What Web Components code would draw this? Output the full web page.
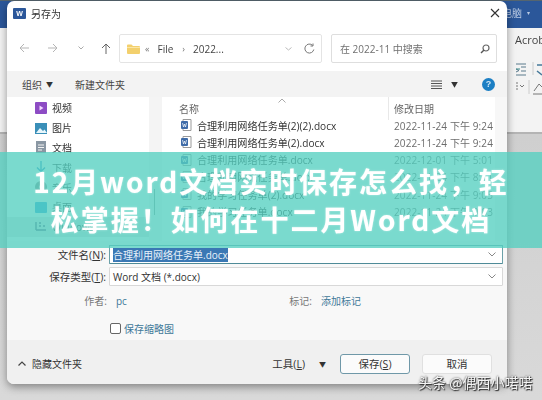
<!DOCTYPE html>
<html lang="zh">
<head>
<meta charset="utf-8">
<title>12月word文档</title>
<style>
  html, body { margin: 0; padding: 0; background: #d6d6d6; }
  body { width: 542px; height: 400px; overflow: hidden; position: relative;
    font-family: "Liberation Sans", "Noto Sans CJK SC", sans-serif; }
</style>
</head>
<body>
<word-backdrop></word-backdrop>
<save-dialog></save-dialog>
<title-band>12月word文档实时保存怎么找，轻松掌握！如何在十二月Word文档</title-band>
<water-mark>头条 @偶西小喏喏</water-mark>

<script>
const FONT = '"Open Sans", "Noto Sans CJK SC", sans-serif';

class WordBackdrop extends HTMLElement {
  connectedCallback() {
    this.attachShadow({ mode: 'open' });
    this.shadowRoot.innerHTML = `
      <style>
        :host { display: flex; flex-direction: column; width: 542px; height: 400px; background: #d3d3d3; filter: blur(.4px); overflow: hidden; }
        .top { height: 28px; background: #2b579a; border-top: 1px solid #55656f; box-sizing: border-box;
          display: flex; justify-content: flex-end; align-items: center; padding: 0 12px 4px 0;
          color: #b9c9e2; font: 10px ${FONT}; gap: 5px; }
        .ribbon { height: 106px; background: #f3f3f3; padding-left: 515px; box-sizing: border-box;
          display: flex; flex-direction: column; font: 11px ${FONT}; color: #444; border-bottom: 2px solid #b4b4b4; }
        .acro { margin-top: 5px; height: 22px; line-height: 14px; white-space: nowrap; }
        .left { position: absolute; left: 0; top: 1px; width: 7px; height: 27px; background: #2b579a; }
        svg { display: block; }
        .rest { flex: 1; background: linear-gradient(#cfcfcf, #d9d9d9); }
      </style>
      <div class="top"><span>电脑</span><span style="font-size:6px">▾</span></div>
      <div class="ribbon">
        <div class="acro">Acrob</div>
        <svg width="27" height="50" viewBox="0 0 27 50">
          <path d="M1 9h10M1 20h10M6 12h5M6 16h5M1 14l3 1.500-3 1.500" stroke="#5b7a8c" fill="none"/>
          <path d="M1 14h4" stroke="#3b8a8a"/>
          <path d="M18 7v13" stroke="#ccc"/>
          <path d="M22 10h5M22 16l5 4" stroke="#46799a" stroke-width="1.500"/>
          <path d="M1 28h2M1 31h2M1 34h2M5 30l2 2 2-2" stroke="#777" fill="none"/>
          <path d="M14 25v14" stroke="#ccc"/>
          <path d="M19 36l5-7 3 3M18 39h9" stroke="#777" fill="none"/>
        </svg>
      </div>
      <div class="left"></div>
      <div class="rest"></div>`;
  }
}

class SideItem extends HTMLElement {
  connectedCallback() {
    this.attachShadow({ mode: 'open' });
    const colour = this.getAttribute('colour') || '#666';
    const shape = this.getAttribute('shape') || 'box';
    const shapes = {
      box: `<rect x="0" y="1" width="12" height="11" rx="1" fill="${colour}"/>`,
      video: `<rect x="0" y="0" width="12" height="12" rx="1" fill="${colour}"/><path d="M4.500 3.500l4 2.500-4 2.500z" fill="#f2d7ff"/>`,
      pic: `<rect x="0" y="1" width="12" height="11" fill="${colour}"/><path d="M1 11l4-5 3 3 1.500-1.500L12 11z" fill="#e8f6fb"/>`,
      doc: `<rect x="1" y="0" width="10" height="12" fill="${colour}"/><path d="M3 4h6M3 6.500h6M3 9h4" stroke="#f3f3f3"/>`,
      down: `<path d="M6 0v10M2 6.500L6 10.500l4-4" stroke="${colour}" stroke-width="1.400" fill="none"/>`,
      disc: `<circle cx="6" cy="6" r="6" fill="${colour}"/><circle cx="6" cy="6" r="2" fill="#f5f5f5"/>`,
      drive: `<path d="M1 1v8M1 9h10M4 5h2M8 5h2M4 2h2" stroke="${colour}" stroke-width="1.400"/>`
    };
    this.shadowRoot.innerHTML = `
      <style>
        :host { display: flex; align-items: center; height: 19.800px; padding-left: 28px; gap: 5px; box-sizing: border-box;
          font: 10px ${FONT}; color: #333; }
        :host([active]) { background: #e5e5e5; }
        svg { flex: none; }
      </style>
      <svg width="12" height="12" viewBox="0 0 12 12">${shapes[shape]}</svg><slot></slot>`;
  }
}

class FileRow extends HTMLElement {
  connectedCallback() {
    this.attachShadow({ mode: 'open' });
    this.shadowRoot.innerHTML = `
      <style>
        :host { display: flex; align-items: center; height: 17.300px; font: 10px ${FONT}; color: #333; }
        .ic { width: 16px; margin-left: 19px; flex: none; }
        .name { width: 197px; flex: none; white-space: nowrap; font-size: 10.100px; }
        .date { color: #6c6c6c; white-space: nowrap; font-size: 10px; letter-spacing: .1px; }
      </style>
      <svg class="ic" width="16" height="12" viewBox="0 0 16 12">
        <path d="M2 .500h8v11H2z" fill="#fff" stroke="#9a9a9a"/>
        <rect x="0" y="2" width="7" height="8" rx="1" fill="#3f6ba8"/>
        <path d="M1.500 4l1 4 1-3 1 3 1-4" stroke="#fff" stroke-width=".7" fill="none"/>
      </svg>
      <span class="name">${this.getAttribute('name')}</span>
      <span class="date">${this.getAttribute('date')}</span>`;
  }
}

class FormField extends HTMLElement {
  connectedCallback() {
    this.attachShadow({ mode: 'open' });
    this.shadowRoot.innerHTML = `
      <style>
        :host { display: flex; flex: none; align-items: center; height: 21px; font: 10.500px ${FONT}; color: #333; }
        .lab { width: 99px; text-align: right; white-space: nowrap; flex: none; }
        u { text-underline-offset: 1px; }
        .box { width: 394px; height: 19px; margin-left: 3px; background: #fff; border: 1px solid #d8d8d8; box-sizing: border-box;
          display: flex; align-items: center; justify-content: space-between; padding: 0 6px 0 3px; border-radius: 1px; font-size: 10px; }
        :host([focus]) .box { border-color: #6ba0a8; border-bottom: 1.500px solid #4f8b98; }
        ::slotted(mark) { background: #3a78b4; color: #e8f2fa; }
      </style>
      <span class="lab">${this.getAttribute('label')}(<u>${this.getAttribute('key')}</u>):</span>
      <div class="box"><span><slot></slot></span>
        <svg width="8" height="5" viewBox="0 0 8 5"><path d="M.5 .5L4 4 7.500 .5" stroke="#888" fill="none"/></svg>
      </div>`;
  }
}

class SaveDialog extends HTMLElement {
  connectedCallback() {
    this.attachShadow({ mode: 'open' });
    this.shadowRoot.innerHTML = `
      <style>
        :host { position: absolute; left: 7px; top: 1px; width: 500px; height: 383px; display: flex; flex-direction: column;
          background: #fff; border-radius: 7px; overflow: hidden; font: 10.500px ${FONT}; color: #333;
          box-shadow: 0 3px 9px rgba(0,0,0,.4); filter: blur(.35px); }
        svg { display: block; flex: none; }
        .titlebar { height: 31px; flex: none; display: flex; align-items: center; padding: 0 7px 7px 6px; box-sizing: border-box; }
        .word { width: 13px; height: 11px; background: #2b579a; color: #fff; font: bold 7px "Liberation Sans", sans-serif;
          text-align: center; line-height: 11px; border-radius: 1px; margin-right: 5px; }
        .titlebar .t { flex: 1; font-size: 10px; }
        .nav { height: 39px; flex: none; display: flex; padding-top: 2px; box-sizing: border-box; align-items: flex-start; }
        .arrows { width: 112px; flex: none; height: 28px; display: flex; align-items: center; padding-left: 12px; box-sizing: border-box; }
        .addr, .search { height: 29px; border: 1px solid #e4e4e4; box-sizing: border-box; display: flex; align-items: center; border-radius: 2px; }
        .addr { width: 203px; padding: 0 6px 0 7px; color: #444; font-size: 10px; }
        .addr .sep { color: #777; font-size: 9px; margin: 0 8px 0 5px; }
        .addr .sep.b { margin: 0 8px 0 9px; }
        .grow { flex: 1; }
        .search { width: 166px; margin-left: 9px; padding: 0 6px 0 8px; justify-content: space-between; color: #707070; font-size: 10px; border-color: #dedede; }
        .tools { height: 26px; flex: none; background: #f3f3f3; display: flex; align-items: center; padding: 0 12px 0 15px; box-sizing: border-box; font-size: 10px; color: #444; }
        .tools .caret { font-size: 7px; margin: 0 22px 0 4px; color: #333; }
        .help { width: 13px; height: 13px; border-radius: 50%; background: #1c7fc4; color: #cfe6f5; font: bold 9px/13px "Liberation Sans", sans-serif; text-align: center; margin-left: 24px; }
        .body { height: 144px; flex: none; display: flex; overflow: hidden; }
        .side { width: 142px; flex: none; padding-top: 1px; }
        .gap { width: 13px; flex: none; background: #f4f4f4; position: relative; }
        .gap i { position: absolute; left: 5px; top: 92px; width: 1px; height: 26px; background: #8a9a98; }
        .list { flex: 1; display: flex; flex-direction: column; }
        .head { height: 19.400px; flex: none; position: relative; display: flex; align-items: flex-end; color: #666; font-size: 10px; line-height: 14px; box-sizing: border-box; }
        .head .n { margin-left: 17px; width: 215px; }
        .head i { position: absolute; left: 226px; top: 0; height: 23px; width: 1px; background: #e8e8e8; }
        .head svg { position: absolute; left: 116px; top: 1px; }
        .scroll { width: 12px; flex: none; background: #f7f7f7; }
        .form { height: 99px; flex: none; background: #f8f8f8; padding-top: 3px; box-sizing: border-box; display: flex; flex-direction: column; gap: 1px; }
        .meta { display: flex; flex: none; height: 21px; margin-top: 2px; align-items: center; font-size: 10px; color: #777; }
        .meta .k1 { width: 100px; text-align: right; flex: none; }
        .meta a { color: #3f7898; margin-left: 9px; }
        .meta .k2 { margin-left: 135px; flex: none; width: 50px; text-align: right; }
        .thumb { display: flex; flex: none; height: 15px; align-items: center; gap: 3px; margin: 9px 0 0 103px; color: #3f7898; font-size: 10px; }
        .thumb b { width: 9px; height: 9px; border: 1px solid #666; border-radius: 2px; background: #fff; }
        .foot { flex: 1; background: #f0f0f0; display: flex; align-items: center; padding: 3px 15px 0 11px; box-sizing: border-box; font-size: 10.500px; }
        .foot .hide { margin-left: 6px; font-size: 10px; }
        .foot .c { margin: 0 2px 0 14px; font-size: 7px; }
        .btn { width: 70px; height: 20px; border: 1px solid #e0e0e0; border-radius: 3px; background: #fbfbfb; text-align: center; line-height: 18px; box-sizing: border-box; font-size: 10.500px; margin-left: 12px; }
        .btn.def { border: 1px solid #6f98a8; }
        .btn u { text-underline-offset: 1px; }
      </style>
      <div class="titlebar">
        <div class="word">W</div><div class="t">另存为</div>
        <svg width="10" height="10" viewBox="0 0 10 10"><path d="M1 1l8 8M9 1L1 9" stroke="#333" stroke-width="1.100"/></svg>
      </div>
      <div class="nav">
        <div class="arrows">
          <svg width="10" height="10" viewBox="0 0 10 10" style="margin-right:19px"><path d="M10 5H1M5 1L1 5l4 4" stroke="#b5b5b5" fill="none"/></svg>
          <svg width="10" height="10" viewBox="0 0 10 10" style="margin-right:20px"><path d="M0 5h9M5 1l4 4-4 4" stroke="#b5b5b5" fill="none"/></svg>
          <svg width="6" height="4" viewBox="0 0 6 4" style="margin-right:17px"><path d="M.5 .5L3 3 5.500 .5" stroke="#aaa" fill="none"/></svg>
          <svg width="10" height="11" viewBox="0 0 10 11"><path d="M5 11V1M1 5l4-4 4 4" stroke="#666" fill="none"/></svg>
        </div>
        <div class="addr">
          <svg width="13" height="10" viewBox="0 0 13 10"><path d="M0 1.500A1 1 0 0 1 1 .5h3.500L6 2h6a1 1 0 0 1 1 1v6a1 1 0 0 1-1 1H1a1 1 0 0 1-1-1z" fill="#f3d06d"/><path d="M0 3h13v1H0z" fill="#fbe6a6"/></svg>
          <span class="sep">«</span><span>File</span><span class="sep b">›</span><span>2022...</span>
          <span class="grow"></span>
          <svg width="7" height="4" viewBox="0 0 7 4" style="margin-right:12px"><path d="M.5 .5L3.500 3 6.500 .5" stroke="#bbb" fill="none"/></svg>
          <svg width="11" height="11" viewBox="0 0 11 11"><path d="M9.800 6.500A4.500 4.500 0 1 1 8.500 2.300M9 .5v2.500H6.500" stroke="#777" fill="none"/></svg>
        </div>
        <div class="search"><span>在 2022-11 中搜索</span>
          <svg width="10" height="10" viewBox="0 0 10 10"><circle cx="6" cy="4" r="3" stroke="#666" stroke-width="1.200" fill="none"/><path d="M4 6L1 9" stroke="#555" stroke-width="1.500"/></svg>
        </div>
      </div>
      <div class="tools">
        <span>组织</span><span class="caret">▼</span><span>新建文件夹</span><span class="grow"></span>
        <svg width="11" height="9" viewBox="0 0 11 9"><path d="M0 1h11M0 3.500h11M0 6h11M0 8.500h11" stroke="#444" stroke-width=".9"/></svg>
        <span class="caret" style="margin:0 0 0 9px">▼</span>
        <div class="help">?</div>
      </div>
      <div class="body">
        <div class="side">
          <side-item shape="video" colour="#8d4cc4">视频</side-item>
          <side-item shape="pic" colour="#3a8fb8">图片</side-item>
          <side-item shape="doc" colour="#8a97a3">文档</side-item>
          <side-item shape="down" colour="#2f8fc9">下载</side-item>
          <side-item shape="disc" colour="#888">音乐</side-item>
          <side-item shape="box" colour="#2aa0d8">桌面</side-item>
          <side-item active shape="drive" colour="#557">Windows</side-item>
        </div>
        <div class="gap"><i></i></div>
        <div class="list">
          <div class="head">
            <span class="n">名称</span><span>修改日期</span><i></i>
            <svg width="8" height="5" viewBox="0 0 8 5"><path d="M.5 4.500L4 1l3.500 3.500" stroke="#aaa" fill="none"/></svg>
          </div>
          <file-row name="合理利用网络任务单(2)(2).docx" date="2022-11-24 下午 9:24"></file-row>
          <file-row name="合理利用网络任务单(2).docx" date="2022-11-24 下午 9:24"></file-row>
          <file-row name="合理利用网络任务单.docx" date="2022-12-01 下午 5:01"></file-row>
          <file-row name="合理利用网络任务单.docx" date="2022-11-24 下午 8:11"></file-row>
          <file-row name="我的学习任务单(2).docx" date="2022-11-24 下午 9:05"></file-row>
          <file-row name="我的学习任务单.docx" date="2022-11-24 下午 9:03"></file-row>
        </div>
        <div class="scroll"></div>
      </div>
      <div class="form">
        <form-field focus label="文件名" key="N"><mark>合理利用网络任务单.docx</mark></form-field>
        <form-field label="保存类型" key="T">Word 文档 (*.docx)</form-field>
        <div class="meta"><span class="k1">作者:</span><a>pc</a><span class="k2">标记:</span><a>添加标记</a></div>
        <div class="thumb"><b></b><span>保存缩略图</span></div>
      </div>
      <div class="foot">
        <svg width="8" height="5" viewBox="0 0 8 5"><path d="M.5 4.500L4 1l3.500 3.500" stroke="#444" stroke-width="1.200" fill="none"/></svg>
        <span class="hide">隐藏文件夹</span><span class="grow"></span>
        <span>工具(<u>L</u>)</span><span class="c">▼</span>
        <div class="btn def">保存(<u>S</u>)</div><div class="btn">取消</div>
      </div>`;
  }
}

class TitleBand extends HTMLElement {
  connectedCallback() {
    this.attachShadow({ mode: 'open' });
    this.shadowRoot.innerHTML = `
      <style>
        :host { position: absolute; left: 0; top: 152px; width: 542px; height: 96px; box-sizing: border-box; padding: 0 30px;
          display: flex; align-items: center; justify-content: center; text-align: center;
          background: rgba(85,208,192,.78); color: #fff;
          font: 700 28px/38px "Noto Sans CJK SC", sans-serif; letter-spacing: 1.950px; }
        div { text-shadow: 0 0 2px rgba(255,255,255,.5); }
      </style>
      <div><slot></slot></div>`;
  }
}

class WaterMark extends HTMLElement {
  connectedCallback() {
    this.attachShadow({ mode: 'open' });
    this.shadowRoot.innerHTML = `
      <style>
        :host { position: absolute; left: 418px; top: 374px; font: 14px/17px "Noto Sans CJK SC", sans-serif; color: #f4f4f4;
          text-shadow: 0 0 2px #222, 1px 1px 1px #333; white-space: nowrap; }
      </style>
      <slot></slot>`;
  }
}

customElements.define('word-backdrop', WordBackdrop);
customElements.define('side-item', SideItem);
customElements.define('file-row', FileRow);
customElements.define('form-field', FormField);
customElements.define('save-dialog', SaveDialog);
customElements.define('title-band', TitleBand);
customElements.define('water-mark', WaterMark);
</script>
</body>
</html>
